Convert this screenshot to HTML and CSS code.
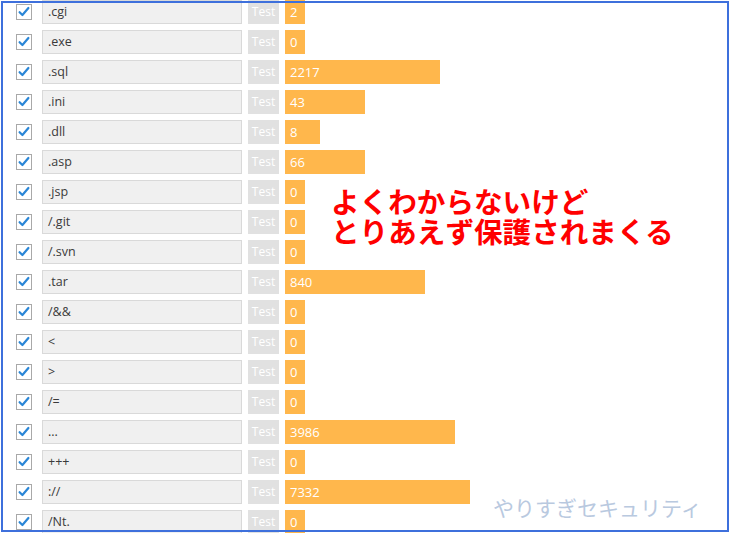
FILE: index.html
```html
<!DOCTYPE html>
<html lang="ja">
<head>
<meta charset="utf-8">
<title>Filters</title>
<link rel="stylesheet" href="styles.css">
</head>
<body>
<div class="list">
  <div class="row"><span class="cb"></span><span class="field">.cgi</span><span class="test">Test</span><span class="bar" style="width:20px">2</span></div>
  <div class="row"><span class="cb"></span><span class="field">.exe</span><span class="test">Test</span><span class="bar" style="width:20px">0</span></div>
  <div class="row"><span class="cb"></span><span class="field">.sql</span><span class="test">Test</span><span class="bar" style="width:155px">2217</span></div>
  <div class="row"><span class="cb"></span><span class="field">.ini</span><span class="test">Test</span><span class="bar" style="width:80px">43</span></div>
  <div class="row"><span class="cb"></span><span class="field">.dll</span><span class="test">Test</span><span class="bar" style="width:35px">8</span></div>
  <div class="row"><span class="cb"></span><span class="field">.asp</span><span class="test">Test</span><span class="bar" style="width:80px">66</span></div>
  <div class="row"><span class="cb"></span><span class="field">.jsp</span><span class="test">Test</span><span class="bar" style="width:20px">0</span></div>
  <div class="row"><span class="cb"></span><span class="field">/.git</span><span class="test">Test</span><span class="bar" style="width:20px">0</span></div>
  <div class="row"><span class="cb"></span><span class="field">/.svn</span><span class="test">Test</span><span class="bar" style="width:20px">0</span></div>
  <div class="row"><span class="cb"></span><span class="field">.tar</span><span class="test">Test</span><span class="bar" style="width:140px">840</span></div>
  <div class="row"><span class="cb"></span><span class="field">/&amp;&amp;</span><span class="test">Test</span><span class="bar" style="width:20px">0</span></div>
  <div class="row"><span class="cb"></span><span class="field">&lt;</span><span class="test">Test</span><span class="bar" style="width:20px">0</span></div>
  <div class="row"><span class="cb"></span><span class="field">&gt;</span><span class="test">Test</span><span class="bar" style="width:20px">0</span></div>
  <div class="row"><span class="cb"></span><span class="field">/=</span><span class="test">Test</span><span class="bar" style="width:20px">0</span></div>
  <div class="row"><span class="cb"></span><span class="field">...</span><span class="test">Test</span><span class="bar" style="width:170px">3986</span></div>
  <div class="row"><span class="cb"></span><span class="field">+++</span><span class="test">Test</span><span class="bar" style="width:20px">0</span></div>
  <div class="row"><span class="cb"></span><span class="field">://</span><span class="test">Test</span><span class="bar" style="width:185px">7332</span></div>
  <div class="row"><span class="cb"></span><span class="field">/Nt.</span><span class="test">Test</span><span class="bar" style="width:20px">0</span></div>
</div>
<div class="note">
  <div class="note-line">よくわからないけど</div>
  <div class="note-line">とりあえず保護されまくる</div>
</div>
<div class="watermark">やりすぎセキュリティ</div>
<div class="frame"></div>
</body>
</html>
```
FILE: styles.css
```css
html, body {
  margin: 0;
  padding: 0;
  background: #ffffff;
  width: 730px;
  height: 533px;
  overflow: hidden;
}
body {
  position: relative;
  font-family: "Open Sans", "Liberation Sans", sans-serif;
}
.list {
  display: flex;
  flex-direction: column;
  gap: 6px;
  padding-left: 16px;
}
.row {
  display: flex;
  align-items: center;
  height: 24px;
}
.cb {
  box-sizing: border-box;
  width: 16px;
  height: 16px;
  border: 1px solid #a9a9a9;
  background: #ffffff url("data:image/svg+xml,%3Csvg xmlns='http://www.w3.org/2000/svg' width='14' height='14' viewBox='0 0 14 14'%3E%3Cpath d='M2.6 7.2 L5.4 10 L11.4 3' fill='none' stroke='%232a86d6' stroke-width='2.2' stroke-linecap='round' stroke-linejoin='round'/%3E%3C/svg%3E") no-repeat center;
  margin-right: 10px;
  flex: none;
}
.field {
  box-sizing: border-box;
  width: 200px;
  height: 24px;
  border: 1px solid #d9d9d9;
  background: #f0f0f0;
  color: #3a3a3a;
  font-size: 12.5px;
  line-height: 22px;
  padding-left: 5px;
  margin-right: 6px;
  flex: none;
}
.test {
  width: 31px;
  height: 24px;
  background: #e1e1e1;
  color: #ffffff;
  font-size: 12px;
  line-height: 24px;
  text-align: center;
  margin-right: 6px;
  flex: none;
}
.bar {
  box-sizing: border-box;
  height: 24px;
  background: #ffb74c;
  color: #ffffff;
  font-size: 13px;
  line-height: 24px;
  padding-left: 5px;
  white-space: nowrap;
  overflow: hidden;
  flex: none;
}
.note {
  position: absolute;
  left: 331px;
  top: 186px;
  display: flex;
  flex-direction: column;
  color: #ff0000;
  font-family: "Noto Sans CJK JP", sans-serif;
  font-weight: 700;
  font-size: 28.6px;
}
.note-line {
  height: 30px;
  line-height: 30px;
  white-space: nowrap;
}
.watermark {
  position: absolute;
  left: 493px;
  top: 493px;
  color: #b9c9df;
  font-family: "Noto Sans CJK JP", sans-serif;
  font-size: 21px;
  line-height: 28px;
}
.frame {
  position: absolute;
  left: 1px;
  top: 1px;
  width: 728px;
  height: 531px;
  box-sizing: border-box;
  border: 2px solid #3e70dc;
  pointer-events: none;
}
```
